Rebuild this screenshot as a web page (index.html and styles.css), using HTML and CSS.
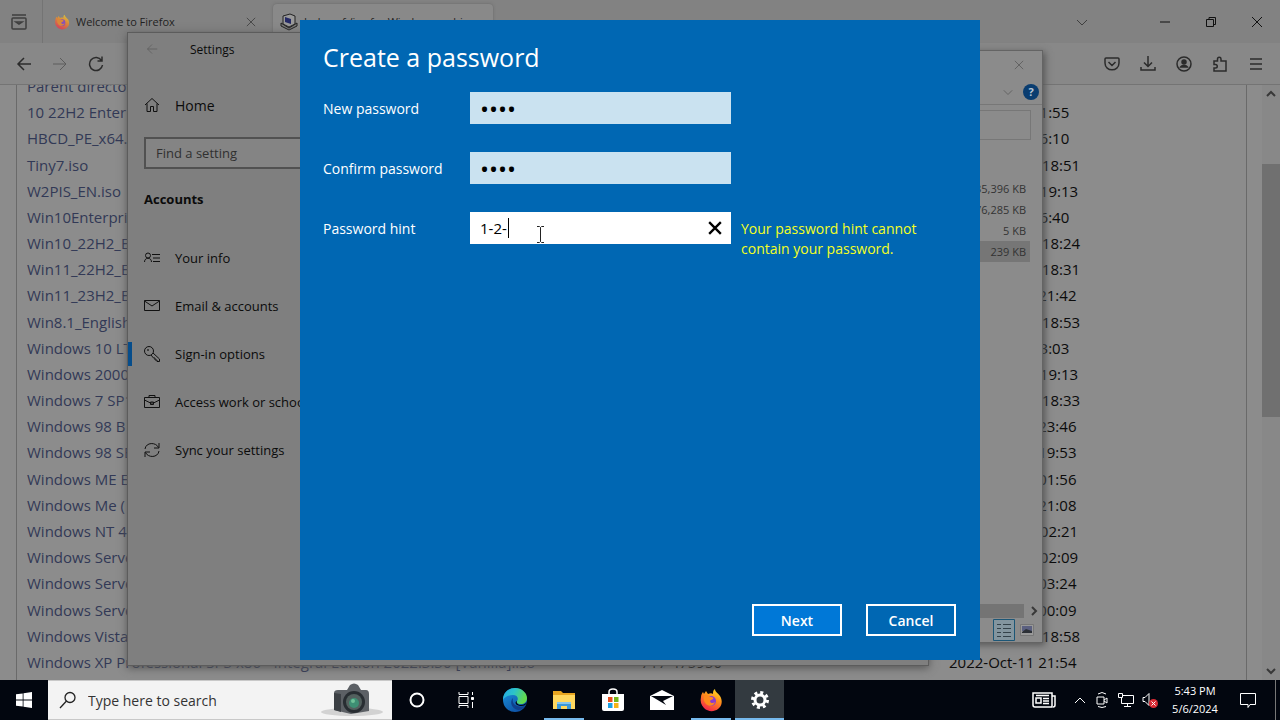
FILE: index.html
```html
<!DOCTYPE html>
<html lang="en">
<head>
<meta charset="utf-8">
<title>Create a password</title>
<link rel="stylesheet" href="styles.css">
</head>
<body>
<svg width="0" height="0" class="defs" aria-hidden="true">
  <defs>
    <linearGradient id="flame" x1="0.8" y1="0" x2="0.3" y2="1"><stop offset="0" stop-color="#ffe226"/><stop offset="0.45" stop-color="#ff8a1c"/><stop offset="1" stop-color="#f5224e"/></linearGradient>
    <linearGradient id="edgeA" x1="0" y1="0" x2="1" y2="0.3"><stop offset="0" stop-color="#23a8e8"/><stop offset="0.5" stop-color="#2cc3c9"/><stop offset="1" stop-color="#62da4d"/></linearGradient>
    <linearGradient id="edgeB" x1="0" y1="0" x2="0.7" y2="1"><stop offset="0" stop-color="#1b95df"/><stop offset="1" stop-color="#0d4fa3"/></linearGradient>
    <symbol id="firefox" viewBox="0 0 24 24">
      <path fill="url(#flame)" d="M2 9c0-2 1-4 2-5l1 2 2-3 2 3c2-1 4-1 5 0 0-2 0-4 2-5 0 3 3 4 5 7 3 5 2 10-2 13-4 3-10 3-14-1C2 17 1 13 2 9z"/>
      <circle cx="12" cy="13" r="5" fill="#8b3bd0"/>
      <path fill="#ff8a1c" d="M5 8c3-1 5 0 7 1 2 0 3 1 2 2-1 1-3 1-3 2 0 2 3 3 5 1-1 4-6 5-9 2-2-2-3-5-2-8z"/>
    </symbol>
    <symbol id="cross" viewBox="0 0 12 12"><path d="M1 1l10 10M11 1L1 11"/></symbol>
    <symbol id="down" viewBox="0 0 12 12"><path d="M1 4l5 5 5-5"/></symbol>
    <symbol id="back" viewBox="0 0 16 16"><path d="M15 8H2M8 2L2 8l6 6"/></symbol>
  </defs>
</svg>

<main class="desktop">
  <section class="browser" aria-label="Firefox">
    <header class="tabs">
      <button class="tab-view" aria-label="View tabs"><svg class="i18 line" viewBox="0 0 18 18"><path d="M2 2h14M3 5h12a1 1 0 0 1 1 1v9a1 1 0 0 1-1 1H3a1 1 0 0 1-1-1V6a1 1 0 0 1 1-1zM6 9h6l-3 2z" stroke-width="1.500"/></svg></button>
      <div class="tab">
        <svg class="i16 faded"><use href="#firefox"/></svg><span>Welcome to Firefox</span>
        <button aria-label="Close tab"><svg class="i10 line"><use href="#cross"/></svg></button>
      </div>
      <div class="tab active">
        <svg class="i18" viewBox="0 0 18 18"><path d="M1 10l8 5 8-5v3l-8 4-8-4z" fill="#777" stroke="#222"/><path d="M3 3l7-2 5 2v8l-6 3-6-3z" fill="#999" stroke="#222"/><path d="M5 4l6 2v5l-6-2z" fill="#252a66"/></svg><span>Index of /iso for Windows archive</span>
      </div>
      <button class="all-tabs" aria-label="List all tabs"><svg class="i12 line"><use href="#down"/></svg></button>
      <div class="caption">
        <button aria-label="Minimize"><svg class="i12 line dark" viewBox="0 0 12 12"><path d="M1 6h10"/></svg></button>
        <button aria-label="Restore"><svg class="i12 line dark" viewBox="0 0 12 12"><path d="M1.500 3.500h7v7h-7zM4 3.500v-2h6.500v7H8.500"/></svg></button>
        <button aria-label="Close"><svg class="i12 line dark"><use href="#cross"/></svg></button>
      </div>
    </header>
    <nav class="toolbar">
      <button aria-label="Back"><svg class="i16 line strong"><use href="#back"/></svg></button>
      <button aria-label="Forward"><svg class="i16 line pale" viewBox="0 0 16 16"><path d="M1 8h13M8 2l6 6-6 6"/></svg></button>
      <button aria-label="Reload"><svg class="i16 line strong" viewBox="0 0 16 16"><path d="M13.500 4.500A6.500 6.500 0 1 0 14.500 9M14 0.500V5H9.500"/></svg></button>
      <div class="tools">
        <button aria-label="Pocket"><svg class="i16 line strong" viewBox="0 0 16 16"><path d="M2 2h12a1 1 0 0 1 1 1v4c0 9-14 9-14 0V3a1 1 0 0 1 1-1zM4.500 6L8 9.500 11.500 6"/></svg></button>
        <button aria-label="Downloads"><svg class="i16 line strong" viewBox="0 0 16 16"><path d="M8 0v10M4 6.500l4 4 4-4M1 11v3h14v-3"/></svg></button>
        <button aria-label="Account"><svg class="i16 line strong" viewBox="0 0 16 16"><circle cx="8" cy="8" r="7"/><circle cx="8" cy="6" r="2" fill="#2b2b2b"/><path d="M4.500 11c1-2 6-2 7 0z" fill="#2b2b2b"/></svg></button>
        <button aria-label="Extensions"><svg class="i16 line strong" viewBox="0 0 16 16"><path d="M2 5h3.500V3a1.700 1.700 0 0 1 3.500 0v2h5v10H2v-3h1.500a1.700 1.700 0 0 0 0-3.500H2z"/></svg></button>
        <button aria-label="Menu"><svg class="i16 line strong" viewBox="0 0 16 16"><path d="M2 3h12M2 8h12M2 13h12"/></svg></button>
      </div>
    </nav>
    <div class="page">
      <div class="listing">
        <table>
          <tbody>
            <tr><td><a href="#">Parent directory/</a></td><td></td><td></td></tr>
            <tr><td><a href="#">10 22H2 Enterprise</a></td><td></td><td>2023-Jul-11 11:55</td></tr>
            <tr><td><a href="#">HBCD_PE_x64.iso</a></td><td></td><td>2022-Jul-11 16:10</td></tr>
            <tr><td><a href="#">Tiny7.iso</a></td><td></td><td>2022-Nov-11 18:51</td></tr>
            <tr><td><a href="#">W2PIS_EN.iso</a></td><td></td><td>2022-Sep-11 19:13</td></tr>
            <tr><td><a href="#">Win10Enterprise</a></td><td></td><td>2023-Jul-11 16:40</td></tr>
            <tr><td><a href="#">Win10_22H2_En</a></td><td></td><td>2022-Nov-11 18:24</td></tr>
            <tr><td><a href="#">Win11_22H2_En</a></td><td></td><td>2022-Nov-11 18:31</td></tr>
            <tr><td><a href="#">Win11_23H2_En</a></td><td></td><td>2023-Oct-31 21:42</td></tr>
            <tr><td><a href="#">Win8.1_English</a></td><td></td><td>2022-Nov-11 18:53</td></tr>
            <tr><td><a href="#">Windows 10 LTSC</a></td><td></td><td>2023-Jul-11 13:03</td></tr>
            <tr><td><a href="#">Windows 2000</a></td><td></td><td>2022-Sep-11 19:13</td></tr>
            <tr><td><a href="#">Windows 7 SP1</a></td><td></td><td>2022-Nov-11 18:33</td></tr>
            <tr><td><a href="#">Windows 98 B</a></td><td></td><td>2022-Oct-11 23:46</td></tr>
            <tr><td><a href="#">Windows 98 SE</a></td><td></td><td>2022-Oct-11 19:53</td></tr>
            <tr><td><a href="#">Windows ME E</a></td><td></td><td>2022-Oct-12 01:56</td></tr>
            <tr><td><a href="#">Windows Me (</a></td><td></td><td>2022-Oct-11 21:08</td></tr>
            <tr><td><a href="#">Windows NT 4</a></td><td></td><td>2022-Sep-12 02:21</td></tr>
            <tr><td><a href="#">Windows Server</a></td><td></td><td>2022-Sep-12 02:09</td></tr>
            <tr><td><a href="#">Windows Server</a></td><td></td><td>2022-Oct-12 03:24</td></tr>
            <tr><td><a href="#">Windows Server</a></td><td></td><td>2022-Oct-12 00:09</td></tr>
            <tr><td><a href="#">Windows Vista</a></td><td></td><td>2022-Nov-11 18:58</td></tr>
            <tr><td><a href="#">Windows XP Professional SP3 x86 - Integral Edition 2022.3.30 [Vanilla].iso</a></td><td>717 475950</td><td>2022-Oct-11 21:54</td></tr>
          </tbody>
        </table>
      </div>
      <div class="scrollbar">
        <svg class="i10 line arrow" viewBox="0 0 10 10"><path d="M1 7l4-4 4 4"/></svg>
        <div class="thumb"></div>
        <svg class="i10 line arrow" viewBox="0 0 10 10"><path d="M1 3l4 4 4-4"/></svg>
      </div>
    </div>
  </section>

  <section class="explorer" aria-label="File Explorer">
    <header><svg class="i10 line pale"><use href="#cross"/></svg></header>
    <div class="ribbon"><svg class="i10 line pale"><use href="#down"/></svg><span class="help">?</span></div>
    <div class="address"></div>
    <ul class="sizes"><li>35,396 KB</li><li>76,285 KB</li><li>5 KB</li><li class="selected">239 KB</li></ul>
    <div class="hscroll"><div></div><svg class="i10 line arrow" viewBox="0 0 10 10"><path d="M3 1l4 4-4 4"/></svg></div>
    <footer>
      <svg class="details" viewBox="0 0 22 22"><path fill="#83959f" stroke="#1c5676" d="M.5.5h21v21H.5z"/><path stroke="#34424a" fill="none" d="M4 5.500h4M4 9.500h4M4 13.500h4M4 17.500h4M10 5.500h8M10 9.500h8M10 13.500h8M10 17.500h8"/></svg>
      <svg class="i14" viewBox="0 0 14 14"><path fill="#999" stroke="#777" d="M.5 1.500h13v11H.5z"/><path fill="#5b6080" d="M2 3h10v5H2z"/><path fill="#2c3036" d="M2 9l4-3 6 2v2H2z"/></svg>
    </footer>
  </section>

  <section class="settings" aria-label="Settings">
    <header><svg class="i12 line pale"><use href="#back"/></svg><span>Settings</span></header>
    <nav>
      <a href="#" class="home"><svg class="i16 line dark" viewBox="0 0 16 16"><path d="M1 8l7-6.500L15 8M3 6.500v8h3.500v-5h3v5H13v-8"/></svg>Home</a>
      <input type="text" placeholder="Find a setting" aria-label="Find a setting">
      <h2>Accounts</h2>
      <a href="#"><svg class="i16 line dark" viewBox="0 0 16 16"><circle cx="4" cy="5.500" r="2.500"/><path d="M.5 12c0-5 7-5 7 0M8 4.500h8M9 8h7M9 11.500h7"/></svg>Your info</a>
      <a href="#"><svg class="i16 line dark" viewBox="0 0 16 16"><path d="M.5 2.500h15v10H.5zM.5 3l7.500 5 7.500-5"/></svg>Email &amp; accounts</a>
      <a href="#" class="current"><svg class="i16 line dark" viewBox="0 0 16 16"><circle cx="5" cy="5" r="4.500"/><circle cx="4" cy="4" r=".5"/><path d="M9 7l6.500 6v2.500H13V14h-2v-2H9.500L7 9"/></svg>Sign-in options</a>
      <a href="#"><svg class="i16 line dark" viewBox="0 0 16 16"><path d="M.5 3.500h15v10H.5zM5 3.500v-2h6v2M.5 6l6 3h3l6-3M6.500 8h3v2.500h-3z"/></svg>Access work or school</a>
      <a href="#"><svg class="i16 line dark" viewBox="0 0 16 16"><path d="M1 7c1-7 11-7 13.500-1.500M15 1v5h-5M15 9c-1 7-11 7-13.500 1.500M1 15v-5h5"/></svg>Sync your settings</a>
    </nav>
  </section>

  <form class="dialog" role="dialog" aria-labelledby="title">
    <h1 id="title">Create a password</h1>
    <div class="fields">
      <label for="new">New password</label>
      <input id="new" type="password" value="1234">
      <span></span>
      <label for="confirm">Confirm password</label>
      <input id="confirm" type="password" value="1234">
      <span></span>
      <label for="hint">Password hint</label>
      <div class="hint">
        <input id="hint" type="text" value="1-2-">
        <span class="caret"></span>
        <svg class="ibeam" viewBox="0 0 9 17"><path d="M1 .5h2.500l1 1 1-1H8M4.500 1.500v14M1 16.500h2.500l1-1 1 1H8"/></svg>
        <button type="button" aria-label="Clear"><svg viewBox="0 0 12 12"><use href="#cross"/></svg></button>
      </div>
      <p>Your password hint cannot contain your password.</p>
    </div>
    <div class="actions"><button type="button" class="primary">Next</button><button type="button">Cancel</button></div>
  </form>
</main>

<footer class="taskbar">
  <button class="start" aria-label="Start"><svg class="i16" viewBox="0 0 16 16"><path fill="#fff" d="M0 2.300L6.700 1.400v6.200H0zM7.500 1.300L16 0v7.600H7.500zM0 8.400h6.700v6.200L0 13.700zM7.500 8.400H16V16l-8.500-1.200z"/></svg></button>
  <label class="search">
    <svg class="i18" viewBox="0 0 18 18"><g fill="none" stroke="#222" stroke-width="1.300"><circle cx="11" cy="6.500" r="5"/><path d="M7.500 10L1 17"/></g></svg>
    <input type="text" placeholder="Type here to search" aria-label="Search">
    <svg class="camera" viewBox="0 0 64 34"><ellipse cx="32" cy="29" rx="31" ry="4" fill="#d2d2d2"/><path fill="#5c6065" d="M14 10q0-3 4-3h9l3-5q4-3 8 0l3 5h5q3 0 3 4v17l-18 3-17-4z"/><path fill="#3c4045" d="M14 10l7 1v18l-7-2z"/><circle cx="34" cy="19" r="11" fill="#282d32"/><circle cx="34" cy="19" r="8" fill="#53605e"/><circle cx="34" cy="20" r="5" fill="#3e8f74"/><circle cx="33" cy="18" r="2" fill="#70c198"/></svg>
  </label>
  <div class="apps">
    <button aria-label="Cortana"><svg class="i16" viewBox="0 0 16 16"><circle cx="8" cy="8" r="6.500" fill="none" stroke="#fff" stroke-width="2"/></svg></button>
    <button aria-label="Task view"><svg class="i18 line white" viewBox="0 0 18 18"><path d="M2 5.500h9v7H2zM2 1v2.500h9V1M2 17v-2.500h9V17M15.500 1v3M15.500 11v6"/><path fill="#fff" d="M14.500 6.500h2v2h-2z"/></svg></button>
    <button aria-label="Edge"><svg class="i24" viewBox="0 0 24 24"><circle cx="12" cy="12" r="12" fill="url(#edgeB)"/><path fill="url(#edgeA)" d="M0 12C0 4 6 0 12 0c7 0 12 5 12 10 0 4-3 6-6 6-3 0-5-1-4-3 2-3 0-6-4-6-5 0-9 3-10 5z"/><path fill="#103f8c" d="M10 10c-4 4-1 11 5 12 3 0 6-2 7-4-5 2-14 0-12-8z"/><path fill="#02060f" d="M14 13c-1 2 1 4 4 4 3 0 5-2 6-3-1 3-3 4-6 4-5 0-7-4-4-5z"/></svg></button>
    <button aria-label="File Explorer" class="open"><svg class="i24" viewBox="0 0 24 24"><path fill="#e8a520" d="M1 3h8l2 2h12v5H1z"/><path fill="#ffd75e" d="M1 7h22v14H1z"/><path fill="#3b97d8" d="M5 21v-7h14v7h-4v-3H9v3z"/><path fill="#84c4ee" d="M5 14h14v2H5z"/></svg></button>
    <button aria-label="Store"><svg class="i24" viewBox="0 0 24 24"><path fill="none" stroke="#fff" stroke-width="1.500" d="M8 7V4c0-4 8-4 8 0v3"/><path fill="#fff" d="M1 6h22v15q0 2-2 2H3q-2 0-2-2z"/><path fill="#e9501f" d="M7 9h4.500v5H7z"/><path fill="#74b71b" d="M13 9h4.500v5H13z"/><path fill="#1ca1e4" d="M7 15h4.500v5H7z"/><path fill="#f7b318" d="M13 15h4.500v5H13z"/></svg></button>
    <button aria-label="Mail"><svg class="i24" viewBox="0 0 24 24"><path fill="#fff" d="M0 8l12-6 12 6v14H0z"/><path fill="#02060f" d="M1 8h22l-10 5 3 4z"/></svg></button>
    <button aria-label="Firefox" class="open"><svg class="i24"><use href="#firefox"/></svg></button>
    <button aria-label="Settings" class="open focused"><svg class="i18" viewBox="0 0 18 18"><circle cx="9" cy="9" r="5" fill="none" stroke="#fff" stroke-width="3"/><circle cx="9" cy="9" r="7.500" fill="none" stroke="#fff" stroke-width="3" stroke-dasharray="3 2.890"/></svg></button>
  </div>
  <div class="tray">
    <svg class="news line white" viewBox="0 0 24 16"><path d="M1 1h19v14H3q-2 0-2-2zM20 4h3v9q0 2-2 2M4 6h5v5H4zM4 3.500h13M11 6.500h6M11 9h6M11 11.500h6" stroke-width="1.500"/></svg>
    <svg class="i12 line white" viewBox="0 0 12 12"><path d="M1 9l5-5 5 5"/></svg>
    <svg class="i16 line white" viewBox="0 0 16 16"><path d="M3 5h7v7H3zM10 8l3-2v5l-3-2M4 2q4-3 8 0M4 14.500q4 2 8 0"/></svg>
    <svg class="i16 line white" viewBox="0 0 16 16"><path d="M5 3.500h10.500v8H3.500V6M.5 1.500h4v4h-4zM9.500 11.500v3M6 14.500h7"/></svg>
    <svg class="i16 line white" viewBox="0 0 16 16"><path d="M1 5.500h2l4-4v12l-4-4H1z"/><circle cx="11.500" cy="11.500" r="4.500" fill="#d92b34" stroke="none"/><path d="M9.500 9.500l4 4M13.500 9.500l-4 4"/></svg>
  </div>
  <div class="clock"><span>5:43 PM</span><span>5/6/2024</span></div>
  <button class="notify" aria-label="Notifications"><svg class="i16 line white" viewBox="0 0 16 16"><path d="M.5 1.500h15v11H10l-2 3v-3H.5z"/></svg></button>
</footer>
</body>
</html>
```
FILE: styles.css
```css
* { box-sizing: border-box; }
body { margin: 0; height: 100vh; display: flex; flex-direction: column; overflow: hidden; font-family: "Open Sans", "Noto Sans", sans-serif; font-size: 13px; color: #0b0b0b; background: #8c8c8c; }
button { border: 0; padding: 0; background: none; color: inherit; font: inherit; display: flex; align-items: center; justify-content: center; }
input { font: inherit; border: 0; border-radius: 0; outline: 0; min-width: 0; }
a { color: inherit; text-decoration: none; }
h1, h2, p, ul { margin: 0; padding: 0; }
svg { display: block; flex: none; }
.defs { position: absolute; }
.i10 { width: 10px; height: 10px; }
.i12 { width: 12px; height: 12px; }
.i14 { width: 14px; height: 14px; }
.i16 { width: 16px; height: 16px; }
.i18 { width: 18px; height: 18px; }
.i24 { width: 24px; height: 24px; }
.line { fill: none; stroke: #3f3f3f; stroke-width: 1; }
.strong { stroke: #2b2b2b; stroke-width: 1.500; }
.dark { stroke: #111; }
.pale { stroke: #5c5c5c; }
.white { stroke: #fff; }
.arrow { stroke: #383838; stroke-width: 2; }
.faded { opacity: .7; }

.desktop { position: relative; flex: 1; min-height: 0; overflow: hidden; }

.browser { height: 100%; display: flex; flex-direction: column; }
.tabs { display: flex; height: 43px; background: #828282; }
.tab-view { width: 43px; border-right: 1px solid #747474; padding-right: 4px; }
.tab { display: flex; align-items: center; gap: 6px; width: 220px; margin-left: 5px; padding: 2px 6px; color: #222; font-size: 11px; white-space: nowrap; overflow: hidden; }
.tab button { width: 22px; margin-left: auto; }
.tab.active { margin-top: 4px; padding: 0 7px 4px; background: #898989; border-radius: 4px 4px 0 0; box-shadow: 0 0 3px #666; }
.all-tabs { width: 32px; margin-left: auto; margin-right: 44px; }
.caption { display: flex; }
.caption button { width: 46px; }
.toolbar { display: flex; align-items: center; height: 42px; padding: 0 6px; background: #888; border-bottom: 1px solid #747474; }
.toolbar button { width: 36px; height: 36px; }
.tools { display: flex; margin-left: auto; }
.page { flex: 1; min-height: 0; display: flex; background: #8c8c8c; }
.listing { flex: 1; min-width: 0; overflow: hidden; margin: 0 15px 0 16px; border: solid #6a6a6a; border-width: 0 1px; }
.listing table { width: 100%; height: calc(100% + 7px); margin-top: -12px; table-layout: fixed; border-collapse: collapse; font-size: 15px; line-height: 20px; white-space: nowrap; }
.listing td { padding: 0 0 0 10px; overflow: hidden; }
.listing td:nth-child(1) { width: 614px; color: #323956; }
.listing td:nth-child(2) { width: 308px; }
.scrollbar { width: 18px; padding: 4px 0 4px; display: flex; flex-direction: column; align-items: center; justify-content: space-between; background: #888; }
.thumb { width: 100%; height: 43%; margin-bottom: 184px; background: #707070; }

.explorer { position: absolute; top: 50px; right: 237px; bottom: 37px; width: 300px; display: flex; flex-direction: column; background: #8b8b8b; border: 1px solid #646464; box-shadow: 2px 2px 7px #555; font-size: 11px; color: #333; }
.explorer header { display: flex; justify-content: flex-end; padding: 9px 18px 8px; }
.ribbon { display: flex; justify-content: flex-end; align-items: center; gap: 10px; padding: 6px 3px 4px; border-bottom: 1px solid #777; }
.help { width: 16px; height: 16px; border-radius: 8px; background: #0a3d70; color: #b6c6d6; text-align: center; font-weight: 700; line-height: 16px; }
.address { height: 30px; margin: 5px 11px 38px 0; border: 1px solid #777; }
.sizes { list-style: none; padding-right: 12px; text-align: right; line-height: 21px; }
.sizes li { padding-right: 4px; }
.sizes .selected { background: #767676; }
.hscroll { display: flex; align-items: center; gap: 5px; margin-top: auto; padding-right: 3px; }
.hscroll div { flex: 1; height: 14px; background: #747474; }
.explorer footer { display: flex; justify-content: flex-end; align-items: center; gap: 5px; padding: 1px 8px 1px 0; }
.details { width: 22px; height: 22px; }

.settings { position: absolute; top: 32px; left: 127px; right: 351px; bottom: 14px; background: #7f7f7f; border: 1px solid #5c5c5c; box-shadow: 0 2px 8px #555; }
.settings header { display: flex; align-items: center; gap: 32px; height: 32px; padding-left: 18px; font-size: 12px; }
.settings nav { display: flex; flex-direction: column; width: 320px; }
.settings nav a { display: flex; align-items: center; gap: 15px; height: 48px; padding-left: 16px; font-size: 13px; }
.settings nav .home { margin: 16px 0 8px; font-size: 14px; }
.settings nav input { height: 32px; margin-left: 16px; padding: 0 10px; border: 2px solid #515151; background: #848484; }
.settings input::placeholder { color: #303030; opacity: 1; }
.settings h2 { padding: 20px 0 25px 16px; font-size: 13px; line-height: 20px; font-weight: 700; }
.settings nav .current { background: linear-gradient(#064d8b, #064d8b) left center / 4px 24px no-repeat; }

.dialog { position: absolute; top: 20px; left: 300px; right: 300px; bottom: 20px; display: flex; flex-direction: column; padding: 17px 24px 24px 23px; background: #0067b3; color: #fff; font-size: 14px; }
.dialog h1 { font-size: 25px; line-height: 40px; font-weight: 400; }
.fields { display: grid; grid-template-columns: 147px 261px 1fr; row-gap: 28px; margin-top: 15px; line-height: 20px; }
.fields label { padding-top: 7px; }
.fields input { width: 100%; height: 32px; padding: 0 10px; background: #cae2f0; color: #000; }
.fields input[type="password"] { font-size: 24px; }
.fields .hint input { background: #fff; font-size: 15px; }
.fields p { height: 32px; padding: 7px 0 0 10px; max-width: 200px; color: #f5ff1f; }
.hint { position: relative; }
.hint button { position: absolute; right: 0; top: 0; width: 32px; height: 32px; }
.hint button svg { width: 14px; height: 14px; fill: none; stroke: #000; stroke-width: 2; }
.caret { position: absolute; left: 38px; top: 6px; width: 1px; height: 20px; background: #000; }
.ibeam { position: absolute; left: 66px; top: 14px; width: 9px; height: 17px; fill: none; stroke: #222; }
.actions { display: flex; justify-content: flex-end; gap: 24px; margin-top: auto; }
.actions button { width: 90px; height: 32px; border: 2px solid #fff; font-weight: 600; }
.actions .primary { background: #0078d7; }

.taskbar { display: flex; height: 40px; background: #02060f; color: #fff; }
.start { width: 48px; }
.search { display: flex; align-items: center; width: 344px; padding: 0 8px 0 11px; gap: 9px; background: #f3f3f3; border: solid #c8c8c8; border-width: 1px 0; }
.search input { flex: 1; background: none; font-size: 14px; }
.search input::placeholder { color: #333; opacity: 1; }
.camera { width: 64px; height: 34px; }
.apps { display: flex; }
.apps button { width: 49px; height: 40px; }
.apps .open { background: linear-gradient(#76b9ed, #76b9ed) center bottom / 40px 2px no-repeat; }
.apps .focused { background: linear-gradient(#76b9ed, #76b9ed) center bottom / 49px 2px no-repeat #333a40; }
.tray { display: flex; align-items: center; gap: 8px; margin-left: auto; }
.news { width: 24px; height: 16px; margin-right: 10px; }
.clock { display: flex; flex-direction: column; justify-content: center; width: 74px; text-align: center; font-size: 11px; line-height: 18px; }
.notify { width: 44px; margin-right: 4px; padding-left: 8px; border-right: 1px solid #777; justify-content: flex-start; }
```
